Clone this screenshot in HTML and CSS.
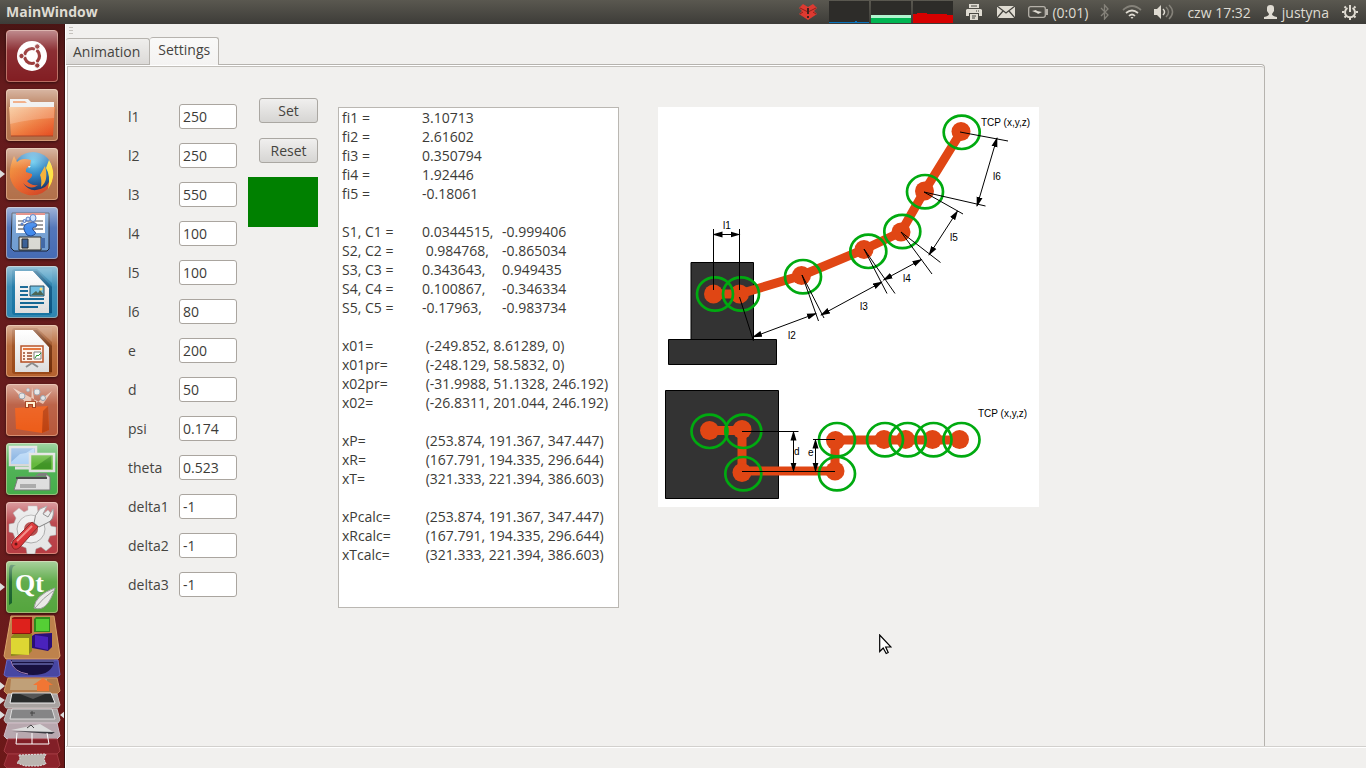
FILE: index.html
```html
<!DOCTYPE html>
<html lang="en">
<head>
<meta charset="utf-8">
<title>MainWindow</title>
<link rel="stylesheet" href="styles.css">
</head>
<body>
<svg class="defs" aria-hidden="true">
  <defs>
    <linearGradient id="gloss" x1="0" y1="0" x2="0" y2="1"><stop offset="0" stop-color="#fff" stop-opacity=".5"/><stop offset=".4" stop-color="#fff" stop-opacity=".08"/><stop offset="1" stop-color="#fff" stop-opacity="0"/></linearGradient>
    <linearGradient id="orange" x1="0" y1="0" x2="1" y2="1"><stop offset="0" stop-color="#f6c08a"/><stop offset=".55" stop-color="#ee7b3d"/><stop offset="1" stop-color="#e5471c"/></linearGradient>
    <radialGradient id="globe" cx=".5" cy=".25" r=".75"><stop offset="0" stop-color="#57c5ee"/><stop offset=".5" stop-color="#1f75b9"/><stop offset="1" stop-color="#132a5c"/></radialGradient>
    <linearGradient id="fox" x1="0" y1="0" x2="1" y2="1"><stop offset="0" stop-color="#f39a35"/><stop offset=".5" stop-color="#e8622a"/><stop offset="1" stop-color="#c93a20"/></linearGradient>
    <linearGradient id="paper" x1="0" y1="0" x2="0" y2="1"><stop offset="0" stop-color="#fff"/><stop offset="1" stop-color="#dcdcdc"/></linearGradient>
    <marker id="arrow" viewBox="0 0 10 6" refX="9" refY="3" markerWidth="10" markerHeight="7" markerUnits="userSpaceOnUse" orient="auto-start-reverse"><path d="M0 0 10 3 0 6z"/></marker>
  </defs>
</svg>

<header class="panel">
  <h1 class="panel-title">MainWindow</h1>
  <div class="indicators">
    <svg class="ind-alert" width="20" height="20" viewBox="0 0 20 20"><path d="M5 2 10 5 15 2 19 6 16 9 19 12 10 18 1 12 4 9 1 6z" fill="#dd3a31"/><path d="M2 6 10 10 18 6M2 12 5 10M18 12 15 10" stroke="#8f1f1a" fill="none"/><path d="M10 6v6M10 14v2" stroke="#44211e" stroke-width="2"/></svg>
    <svg class="ind-graph" width="124" height="22" viewBox="0 0 124 22"><path fill="#2d2c29" d="M0 0h40v22H0zM42 0h40v22H42zM84 0h40v22H84z"/><path d="M0 21h26v-1h2v1h12v1H0z" fill="#0a75bd"/><path fill="#b1f5cf" d="M42 14h40v3H42z"/><path fill="#00b552" d="M42 17h40v5H42z"/><path d="M84 13h4v-1h10v1h20v1h6v8H84z" fill="#d60000"/></svg>
    <svg class="ind-printer" width="16" height="16" viewBox="0 0 16 16"><path d="M3 0h10v4H3z" fill="#dfdbd2"/><path d="M1 5h14l1 1v6h-3V9H3v3H0V6z" fill="#dfdbd2"/><path d="M4 10h8v6H4z" fill="#dfdbd2"/><path d="M5 2h6M6 12h4M6 14h3M10 7h1M12 7h1" stroke="#45443f"/></svg>
    <svg class="ind-mail" width="18" height="12" viewBox="0 0 18 12"><path d="M0 0h18v12H0z" fill="#dfdbd2"/><path d="M0 0 9 7 18 0M0 12 6 5M18 12 12 5" fill="none" stroke="#45443f" stroke-width="1.3"/></svg>
    <svg class="ind-battery" width="20" height="12" viewBox="0 0 20 12"><rect x=".7" y=".7" width="16.6" height="10.6" rx="2" fill="none" stroke="#b5b1a9" stroke-width="1.3"/><path d="M18 3h2v6h-2z" fill="#b5b1a9"/><path d="M4 5 8 4 9 5 14 6 10 8 9 7z" fill="#dfdbd2"/></svg>
    <span class="ind-time">(0:01)</span>
    <svg class="ind-bt" width="9" height="16" viewBox="0 0 9 16"><path d="M1 4 8 11 4.500 15V1L8 5 1 12" fill="none" stroke="#85827a" stroke-width="1.3"/></svg>
    <svg class="ind-wifi" width="20" height="14" viewBox="0 0 20 14" fill="none" stroke="#dfdbd2" stroke-width="1.7"><path d="M1 5Q10-3 19 5" stroke="#85827a"/><path d="M4 8q6-5 12 0M7 11q3-3 6 0"/><path d="M8.500 12h3L10 14z" fill="#dfdbd2" stroke="none"/></svg>
    <svg class="ind-volume" width="20" height="16" viewBox="0 0 20 16" fill="none" stroke-width="1.5"><path d="M0 5h3l4-4v14l-4-4H0z" fill="#dfdbd2"/><path d="M9 5q3 3 0 6" stroke="#dfdbd2"/><path d="M12 3q5 5 0 10M15 1q7 7 0 14" stroke="#85827a"/></svg>
    <span class="ind-clock">czw 17:32</span>
    <svg class="ind-user" width="13" height="14" viewBox="0 0 13 14"><path d="M3 3Q3 0 6.500 0T10 3V6L8 9q0 2 5 3v2H0v-2q5-1 5-3L3 6z" fill="#dfdbd2"/></svg>
    <span class="ind-name">justyna</span>
    <svg class="ind-gear" width="16" height="16" viewBox="0 0 16 16" fill="none" stroke="#dfdbd2"><path d="M5.500 4A5 5 0 1 0 10.500 4" stroke-width="2"/><path d="M8 1v7" stroke-width="2"/><path d="M2.500 2.500 4 4M13.500 2.500 12 4M0 8h2M14 8h2M2.500 13.500 4 12M13.500 13.500 12 12M8 14v2" stroke-width="2"/></svg>
  </div>
</header>

<div class="desktop">
  <nav class="launcher" aria-label="Launcher">
    <button class="tile dash" type="button" aria-label="Dash">
      <svg viewBox="0 0 52 52"><circle cx="26" cy="26" r="15" fill="#fff"/><circle cx="26" cy="26" r="7.500" fill="none" stroke="#963333" stroke-width="3.200"/><path d="M26 26 12 26M26 26 33 14M26 26 33 38" stroke="#fff" stroke-width="1.500"/><g fill="#963333" stroke="#fff" stroke-width="1"><circle cx="15.500" cy="26" r="2.700"/><circle cx="31.300" cy="16.500" r="2.700"/><circle cx="31.300" cy="35.500" r="2.700"/></g><rect width="52" height="52" rx="5" fill="url(#gloss)"/></svg>
    </button>
    <button class="tile brown" type="button" aria-label="Files">
      <svg viewBox="0 0 52 52"><path d="M4 19V10h18l3 3h23v7z" fill="#eee"/><path d="M7 12h12l2 2H7z" fill="#ee9967"/><path d="M3 18h46l-2 29H5z" fill="url(#orange)"/><path d="M4 18h44v11Q24 30 4 35z" fill="#fff" fill-opacity=".2"/><path d="M5 47h42" stroke="#a64325"/><rect width="52" height="52" rx="4" fill="url(#gloss)"/></svg>
    </button>
    <button class="tile brown running" type="button" aria-label="Firefox">
      <svg viewBox="0 0 52 52"><circle cx="27" cy="24" r="20" fill="url(#globe)"/><path d="M44 13Q51 27 44 38 36 49 22 47 7 43 4 29 3 19 8 8l3 6q5-5 14-2l-1 6q-5 2-4 6l6 2q1 3-5 7 4 5 11 4-7 6-15-2 8 12 22 4 9-8 5-26" fill="url(#fox)"/><path d="M43 12q9 15-1 29 3-13-2-21z" fill="#ffe13b"/><path d="M39 18q4 15-4 21 1-8-1-12z" fill="#f5ad2e"/><path d="M22 18h3l-2 2z" fill="#eee"/><rect width="52" height="52" rx="4" fill="url(#gloss)"/></svg>
    </button>
    <button class="tile blue" type="button" aria-label="Save desktop">
      <svg viewBox="0 0 52 52"><path d="M6 6h37v36l-2 2H8l-3-3z" fill="#6d9bd0" stroke="#161d2c"/><path d="M10 6h29v20H10z" fill="#fff"/><path d="M10 7h29" stroke="#d85a4f" stroke-width="2"/><path d="M12 14h25M12 18h25M12 22h25" stroke="#222"/><path d="M13 30h22v13H13z" fill="#d8d8d2" stroke="#222"/><path d="M16 32h6v9h-6z" fill="#345a91" stroke="#222"/><path d="M35 31h4v10h-4z" fill="#3b64a3"/><path d="M21 28q-7-9 1-12 11-2 8 4-5 0-3 3 6 4-2 6z" fill="#3382ec" stroke="#163e8b"/><g fill="#bcd9ff" stroke="#164aad"><ellipse cx="27" cy="11" rx="3" ry="3.500"/><circle cx="22" cy="12" r="2"/><circle cx="18.500" cy="14" r="1.500"/><circle cx="16" cy="17" r="1"/></g><rect width="52" height="52" rx="4" fill="url(#gloss)"/></svg>
    </button>
    <button class="tile writer" type="button" aria-label="Writer">
      <svg viewBox="0 0 52 52"><rect x="6" y="3" width="40" height="46" rx="3" fill="#07689a" opacity=".65"/><path d="M9 5h18l16 17v25H9z" fill="url(#paper)"/><path d="M27 5h4l15 16v26h-3V22z" fill="#075381"/><path d="M31 3h15v14z" fill="#338fbc"/><path d="M14 21h8M14 25h8M14 29h8M14 33h24M14 37h24M14 41h18" stroke="#0c6190" stroke-width="2"/><path d="M24 20h14v10H24z" fill="#65b9de" stroke="#164156"/><path d="m25 29 5-4 2 2 2-3 4 5z" fill="#405c4a"/><circle cx="35" cy="23" r="1.500" fill="#ffda6c"/><rect width="52" height="52" rx="4" fill="url(#gloss)"/></svg>
    </button>
    <button class="tile impress" type="button" aria-label="Impress">
      <svg viewBox="0 0 52 52"><rect x="6" y="3" width="40" height="46" rx="3" fill="#8c3b0b" opacity=".65"/><path d="M9 5h18l16 17v25H9z" fill="url(#paper)"/><path d="M27 5h4l15 16v26h-3V22z" fill="#722d07"/><path d="M31 3h15v14z" fill="#b56a3c"/><path d="M15 21h22v16H15z" fill="#fff2e8" stroke="#b24719" stroke-width="1.500"/><path d="M17 24h18" stroke="#e26d30" stroke-width="2"/><path d="M17 28h2M21 28h5M17 31h2M21 31h5M17 34h2M21 34h5" stroke="#923f1d" stroke-width="1.500"/><path d="M28 27h7v7h-7z" fill="#fff" stroke="#777"/><path d="m29 33 2-3 1 1 3-3" fill="none" stroke="#16931e"/><path d="m26 38-6 4M26 38l6 4" stroke="#888" stroke-width="2"/><rect width="52" height="52" rx="4" fill="url(#gloss)"/></svg>
    </button>
    <button class="tile software" type="button" aria-label="Software centre">
      <svg viewBox="0 0 52 52"><path d="M7 4 19 18 8 13 25 21 26 3 29 20 46 7 37 20z" fill="#f9e6d5" opacity=".7"/><g fill="#ddd" stroke="#7b8a9a"><circle cx="16" cy="12" r="3"/><circle cx="31" cy="8" r="3"/><circle cx="22" cy="6" r="1.500"/><circle cx="37" cy="14" r="2.500"/></g><path d="m9 24 33-2 1 24-7 3-26-4z" fill="#ed5b17"/><path d="m42 22-5 5-1 22 7-3z" fill="#bd400e"/><path d="M21 24v-5h7v5" fill="none" stroke="#9f330d" stroke-width="4"/><path d="M21 23v-4h7v4" fill="none" stroke="#fff0cd" stroke-width="2"/><rect width="52" height="52" rx="4" fill="url(#gloss)"/></svg>
    </button>
    <button class="tile green" type="button" aria-label="Remote desktop">
      <svg viewBox="0 0 52 52"><path d="M4 4h26v18H4z" fill="#78a9df" stroke="#d5d5d5" stroke-width="2.500"/><path d="m5 19 9-8 6-1 8-5v16H5z" fill="#a9cff5"/><path d="M9 25h14" stroke="#ddd" stroke-width="3"/><path d="M24 11h24v17H24z" fill="#58b32d" stroke="#ddd" stroke-width="2.500"/><path d="m26 26 19-13v13z" fill="#328d15"/><path d="M33 30h8v3H29z" fill="#777"/><path d="M12 34h28v-3l4 3v13H8z" fill="#ddd" stroke="#777"/><path d="M10 35h31" stroke="#444" stroke-width="2"/><path d="M14 41h16v4H14z" fill="#aaa"/><rect width="52" height="52" rx="4" fill="url(#gloss)"/></svg>
    </button>
    <button class="tile redtile" type="button" aria-label="System settings">
      <svg viewBox="0 0 52 52"><g fill="#e5e5e5" stroke="#999" stroke-width=".5"><path d="M22 4h9l1 6 5 2 5-4 5 6-4 5 2 5 5 1v8l-6 1-2 5 4 5-6 5-5-4-5 2-1 5h-8l-1-6-5-2-5 3-5-6 4-5-2-5-4-1v-8l5-1 2-5-3-5 6-5 5 4 4-2z"/></g><circle cx="25" cy="27" r="14" fill="#eee" stroke="#aaa"/><circle cx="25" cy="27" r="7" fill="#b34949"/><path d="M28 21Q28 13 34 7L41 4 37 12 42 15 47 7Q49 18 41 21L33 25z" fill="#e6e6e6" stroke="#777"/><path d="m26 20 6 5-18 20q-4 4-7 1t0-7z" fill="#d92e31" stroke="#892021"/><path d="M26 24 11 39" stroke="#f28a83" stroke-width="2"/><circle cx="10" cy="42" r="1.500" fill="#631010"/><rect width="52" height="52" rx="4" fill="url(#gloss)"/></svg>
    </button>
    <button class="tile qt running" type="button" aria-label="Qt Creator">
      <svg viewBox="0 0 52 52"><path d="M7 4Q3 3 3 9v35l3-2V10q0-5 4-6z" fill="#145e28"/><text x="9" y="31" class="qt-text">Qt</text><path d="M49 27Q29 34 28 47q13 5 21-20" fill="#e9e9e7" stroke="#999"/><path d="M47 30Q37 37 29 47" fill="none" stroke="#999"/><rect width="52" height="52" rx="4" fill="url(#gloss)"/></svg>
    </button>
    <svg class="stack" width="65" height="154" viewBox="0 614 65 154" role="img" aria-label="Folded launcher items">
      <path d="M11 616h43l6 40-2 3H6l-2-3z" fill="#be824c" stroke="#dba46c"/>
      <path d="m12 618 2-1h18v16l-2 1H12z" fill="#8d120f"/><path d="M12 619h18v14H12z" fill="#dd211c"/><path d="m34 619 2-2h14v15H34z" fill="#2e8a1b"/><path d="M36 619h13v12H36z" fill="#55cf35"/><path d="m11 637 3-3h18v17l-3 3-18 2z" fill="#8b871b"/><path d="M11 638h18v17l-18-1z" fill="#ddd633"/><path d="m32 636 3-2 17-1v14l-4 4-16-3z" fill="#2a0f78"/><path d="m35 635 13 2v13l-13-3z" fill="#4a22bd"/>
      <path d="M7 660h51l2 15-3 2H7l-3-2z" fill="#4847a3" stroke="#6866c3"/><path d="M11 660q2 15 22 15t21-15z" fill="#181141"/><path d="M11 661q2 11 17 13" fill="none" stroke="#a883b8"/><path d="M12 661h42M13 664h40" stroke="#8790dd"/>
      <path d="M8 678h49l3 13-3 3H7l-3-3z" fill="#b17b4c" stroke="#d29a63"/><path d="M11 679h36v11H10z" fill="#c0a078"/><path d="m43 678 10 7h-4v6H37v-6h-4z" fill="#f17634"/>
      <path d="M8 694h49l3 11-2 3H6l-2-3z" fill="#a8a3a1" stroke="#c4bfbd"/><path d="M12 693h39l4 10H10z" fill="#292b2b" stroke="#eee"/><path d="m20 694 25 0-12 5z" fill="#555"/>
      <path d="M8 709h49l3 11-2 3H6l-2-3z" fill="#aaa5a6" stroke="#c7c1c3"/><path d="M12 709h40l3 10H10z" fill="#858586" stroke="#ddd"/><path d="M30 713h5M32 711v5" stroke="#444"/>
      <path d="M8 723h49l3 13-3 3H7l-3-3z" fill="#b8a8af" stroke="#d1bdc8"/><path d="m11 730 29-6 15 9z" fill="#ddd"/><path d="m12 731 43 1-3 2z" fill="#3a3a40"/><path d="m27 728 4-3 3 3" fill="none" stroke="#444"/>
      <path d="M8 739h49l3 12-3 3H7l-3-3z" fill="#811f27" stroke="#a03940"/><path d="m17 733-1 11h33l-2-11M32 733v11" fill="none" stroke="#fff"/>
      <path d="M8 754h49l3 11-3 3H7l-3-3z" fill="#8c232b" stroke="#a03940"/><path d="m19 755 27-1-2 5 2 5-7 2H25l-8-3 3-4z" fill="#bbb5b0" stroke="#ddd" stroke-dasharray="2 1"/>
      <path d="m0 682 5 4-5 4zM0 697l5 3-5 4zM0 711l5 4-5 4zM65 711l-5 4 5 4z" fill="#ddd"/>
    </svg>
  </nav>

  <main class="window">
    <div class="toolbar"><span class="grip"></span></div>
    <div class="tabs" role="tablist">
      <button class="tab" type="button" role="tab" aria-selected="false">Animation</button>
      <button class="tab active" type="button" role="tab" aria-selected="true">Settings</button>
    </div>
    <section class="pane">
      <div class="pane-inner">
        <form class="params">
          <label for="l1">l1</label><input id="l1" type="text" value="250">
          <label for="l2">l2</label><input id="l2" type="text" value="250">
          <label for="l3">l3</label><input id="l3" type="text" value="550">
          <label for="l4">l4</label><input id="l4" type="text" value="100">
          <label for="l5">l5</label><input id="l5" type="text" value="100">
          <label for="l6">l6</label><input id="l6" type="text" value="80">
          <label for="e">e</label><input id="e" type="text" value="200">
          <label for="d">d</label><input id="d" type="text" value="50">
          <label for="psi">psi</label><input id="psi" type="text" value="0.174">
          <label for="theta">theta</label><input id="theta" type="text" value="0.523">
          <label for="delta1">delta1</label><input id="delta1" type="text" value="-1">
          <label for="delta2">delta2</label><input id="delta2" type="text" value="-1">
          <label for="delta3">delta3</label><input id="delta3" type="text" value="-1">
        </form>
        <div class="actions">
          <div class="buttons">
            <button class="push" type="button">Set</button>
            <button class="push" type="button">Reset</button>
          </div>
          <div class="status-light"></div>
        </div>
        <textarea class="results" aria-label="Results" spellcheck="false">
fi1 =&#9;3.10713
fi2 =&#9;2.61602
fi3 =&#9;0.350794
fi4 =&#9;1.92446
fi5 =&#9;-0.18061

S1, C1 =&#9;0.0344515,&#9;-0.999406
S2, C2 =&#9; 0.984768,&#9;-0.865034
S3, C3 =&#9;0.343643,&#9;0.949435
S4, C4 =&#9;0.100867,&#9;-0.346334
S5, C5 =&#9;-0.17963,&#9;-0.983734

x01=&#9; (-249.852, 8.61289, 0)
x01pr=&#9; (-248.129, 58.5832, 0)
x02pr=&#9; (-31.9988, 51.1328, 246.192)
x02=&#9; (-26.8311, 201.044, 246.192)

xP=&#9; (253.874, 191.367, 347.447)
xR=&#9; (167.791, 194.335, 296.644)
xT=&#9; (321.333, 221.394, 386.603)

xPcalc=&#9; (253.874, 191.367, 347.447)
xRcalc=&#9; (167.791, 194.335, 296.644)
xTcalc=&#9; (321.333, 221.394, 386.603)</textarea>
        <svg class="diagram" width="381" height="400" viewBox="658 107 381 400" role="img" aria-label="Manipulator dimensions">
          <path d="M658 107h381v400H658z" fill="#fff"/>
          <g fill="#333" stroke="#000"><path d="M691 262.500h62.500v77H691zM668.500 339.500h108v25h-108zM665.500 390.500h113v108h-113z"/></g>
          <g fill="none" stroke="#e04614" stroke-width="9" stroke-linejoin="round"><path d="M713.500 294h26l62-18.500 62.500-26 37-17.500 23.500-41 36.500-59"/><path d="M710 430.500h32V471h93v-31h124"/></g>
          <g fill="#e04614"><circle cx="713.500" cy="294" r="9.500"/><circle cx="739.500" cy="294" r="9.500"/><circle cx="801.500" cy="275.500" r="9.500"/><circle cx="864" cy="249.500" r="9.500"/><circle cx="901" cy="232" r="9.500"/><circle cx="924.500" cy="191" r="9.500"/><circle cx="961" cy="131.500" r="9.500"/><circle cx="709.500" cy="430.500" r="9.500"/><circle cx="742" cy="429.500" r="9.500"/><circle cx="742" cy="472.500" r="9.500"/><circle cx="835" cy="471" r="9.500"/><circle cx="835.500" cy="440.500" r="9.500"/><circle cx="884" cy="439.500" r="9.500"/><circle cx="905.500" cy="439.500" r="9.500"/><circle cx="932.500" cy="439.500" r="9.500"/><circle cx="959.500" cy="439.500" r="9.500"/></g>
          <g fill="none" stroke="#00aa10" stroke-width="2.700"><ellipse cx="715" cy="294" rx="18" ry="16.700"/><ellipse cx="741" cy="294" rx="18" ry="16.700"/><ellipse cx="803" cy="276.700" rx="18" ry="16.700"/><ellipse cx="868.300" cy="251.300" rx="18" ry="16.700"/><ellipse cx="902.300" cy="231.500" rx="18" ry="16.700"/><ellipse cx="925" cy="191.700" rx="18" ry="16.700"/><ellipse cx="961.700" cy="132.300" rx="18" ry="16.700"/><ellipse cx="709.500" cy="431.300" rx="18" ry="16.700"/><ellipse cx="743.300" cy="431.300" rx="18" ry="16.700"/><ellipse cx="743.300" cy="473.700" rx="18" ry="16.700"/><ellipse cx="837" cy="473.700" rx="18" ry="16.700"/><ellipse cx="837" cy="439.700" rx="18" ry="16.700"/><ellipse cx="885" cy="439.700" rx="18" ry="16.700"/><ellipse cx="907.700" cy="439.700" rx="18" ry="16.700"/><ellipse cx="933.500" cy="439.700" rx="18" ry="16.700"/><ellipse cx="961.500" cy="439.700" rx="18" ry="16.700"/></g>
          <path fill="none" stroke="#000" d="M713.500 229v61M739.500 229v61M739.500 297l14 44M802 275l16.500 46M802 275l22 43M864 249l23 44.500M864 249l31 44.500M901 232l31 42M901 232l39.500 30.500M924 192l39 22M924 192l61.500 14M960 132l48 9M742 431.500h56.500M742 471.500h93M813 439.500h22"/>
          <g stroke="#000" marker-start="url(#arrow)" marker-end="url(#arrow)"><path d="M713.500 234.500h26"/><path d="m753 337 63-23.500"/><path d="m821 315 61-33"/><path d="m883.500 280 38-20.500"/><path d="m929 255 28.500-44"/><path d="m977 206 20-68"/><path d="M793.500 431.500v40"/><path d="M815.500 439.500v32"/></g>
          <g class="dims"><text x="723" y="229">l1</text><text x="788" y="339">l2</text><text x="860" y="310">l3</text><text x="903" y="282">l4</text><text x="950" y="241">l5</text><text x="993" y="180">l6</text><text x="981" y="126">TCP (x,y,z)</text><text x="978" y="417">TCP (x,y,z)</text><text x="794" y="455">d</text><text x="808" y="456">e</text></g>
        </svg>
      </div>
    </section>
    <footer class="statusbar"></footer>
  </main>
</div>
<svg class="pointer" width="13" height="21" viewBox="0 0 13 21" aria-hidden="true"><path d="M.7 1v16.500l3.500-3.500 3 5.500 2-1-2.500-5.500H12z" fill="#fff" stroke="#000" stroke-width="1.200"/></svg>
</body>
</html>
```
FILE: styles.css
```css
* { box-sizing: border-box; }

body {
  margin: 0;
  height: 100vh;
  display: flex;
  flex-direction: column;
  overflow: hidden;
  background: #f1f0ee;
  color: #45443f;
  font: 14px/19px "Open Sans", "Noto Sans", sans-serif;
}

button, input, textarea { font: inherit; color: inherit; }
.defs { position: absolute; width: 0; height: 0; }

.panel {
  flex: none;
  height: 24px;
  display: flex;
  align-items: center;
  justify-content: space-between;
  padding: 0 8px 0 6px;
  background: linear-gradient(#5a5850, #3d3c38);
  color: #dfdbd2;
}
.panel-title { margin: 0; font-size: 14px; line-height: 22px; font-weight: 700; }
.indicators { display: flex; align-items: center; }
.ind-graph { margin: 0 13px 0 11px; }
.ind-mail { margin: 0 13px 0 15px; }
.ind-time { margin: 0 12px 0 4px; }
.ind-wifi { margin: 0 12px 0 13px; }
.ind-clock { margin: 0 13px; }
.ind-name { margin: 0 13px 0 5px; }

.desktop { flex: 1; min-height: 0; display: flex; }

.launcher {
  flex: none;
  width: 65px;
  display: flex;
  flex-direction: column;
  align-items: center;
  gap: 7px;
  padding-top: 6px;
  overflow: hidden;
  background: linear-gradient(#4a1514, #651b1c 60px, #681d1e 500px, #6c1818);
  border-right: 1px solid #3a1010;
}
.tile {
  position: relative;
  flex: none;
  width: 52px;
  height: 52px;
  padding: 0;
  border: 0;
  border-radius: 4px;
  box-shadow: inset 0 0 0 1px rgba(255, 210, 180, .45), 0 1px 3px rgba(0, 0, 0, .5);
}
.tile svg { display: block; width: 52px; height: 52px; }
.dash { background: #821d22; }
.brown { background: #b2704a; }
.blue { background: #456bb4; }
.writer { background: #2e86b2; }
.impress { background: #b5622f; }
.software { background: #b7573a; }
.green { background: #45ad4b; }
.redtile { background: #b73c43; }
.qt { background: #54a53d; }
.qt-text { font: bold 26px "Liberation Serif", serif; fill: #fff; }
.running::before {
  content: "";
  position: absolute;
  left: -6px;
  top: 22px;
  border: 4px solid transparent;
  border-left: 5px solid #ddd;
  border-right: 0;
}
.stack { flex: none; margin-top: -6px; }

.window { flex: 1; min-width: 0; display: flex; flex-direction: column; border-left: 1px solid #fff; }
.toolbar { flex: none; height: 14px; padding: 3px 3px 0; }
.grip { display: block; width: 4px; height: 8px; background: repeating-linear-gradient(#c5c2bd 0 1px, transparent 1px 3px); }

.tabs { flex: none; display: flex; align-items: flex-end; height: 26px; }
.tab {
  height: 26px;
  padding: 0 9px 0 7px;
  border: 1px solid #b6b3ae;
  border-bottom: 0;
  border-left: 0;
  border-radius: 3px 3px 0 0;
  background: linear-gradient(#efeeec, #dcdad8);
}
.tab.active {
  position: relative;
  z-index: 1;
  height: 28px;
  margin-bottom: -1px;
  padding: 0 8px 4px;
  background: linear-gradient(#f9f9f8, #f4f3f2);
}

.pane {
  flex: 1;
  min-height: 0;
  margin-right: 101px;
  padding: 1px 0 0 1px;
  border: 1px solid #b6b3ae;
  border-width: 1px 1px 0 0;
  border-radius: 0 4px 0 0;
  background: #fff;
}
.pane-inner {
  height: 100%;
  display: flex;
  align-items: flex-start;
  padding: 31px 20px 0 60px;
  border: 1px solid #c2bfba;
  border-width: 1px 0 0 1px;
  border-radius: 0 3px 0 0;
  background: #f1f0ee;
}

.params {
  flex: none;
  display: grid;
  grid-template-columns: 51px 58px;
  grid-auto-rows: 25px;
  row-gap: 14px;
  align-items: center;
  margin-top: 6px;
}
.params input {
  width: 58px;
  height: 25px;
  padding: 0 3px;
  border: 1px solid #aaa59f;
  border-radius: 3px;
  background: #fff;
  color: #3c3b37;
}

.actions { flex: none; width: 70px; margin-left: 11px; display: flex; flex-direction: column; align-items: flex-end; gap: 14px; }
.buttons { display: flex; flex-direction: column; gap: 15px; }
.push {
  width: 59px;
  height: 25px;
  padding: 0;
  border: 1px solid #aaa7a2;
  border-radius: 3px;
  background: linear-gradient(#f0efee, #d6d5d3);
}
.status-light { width: 70px; height: 50px; background: #008000; }

.results {
  flex: none;
  width: 281px;
  height: 501px;
  margin: 9px 0 0 20px;
  padding: 0 0 0 3px;
  border: 1px solid #bab7b2;
  background: #fff;
  color: #3c3b37;
  resize: none;
  outline: 0;
  overflow: hidden;
  white-space: pre;
  tab-size: 80px;
}
.diagram { flex: none; margin: 9px 0 0 39px; }
.dims { font: 10px "Liberation Sans", Arial, sans-serif; fill: #000; }

.statusbar { flex: none; height: 22px; border-top: 1px solid #d2d0cd; box-shadow: inset 0 1px #fff; }
.pointer { position: absolute; left: 879px; top: 634px; }
```
